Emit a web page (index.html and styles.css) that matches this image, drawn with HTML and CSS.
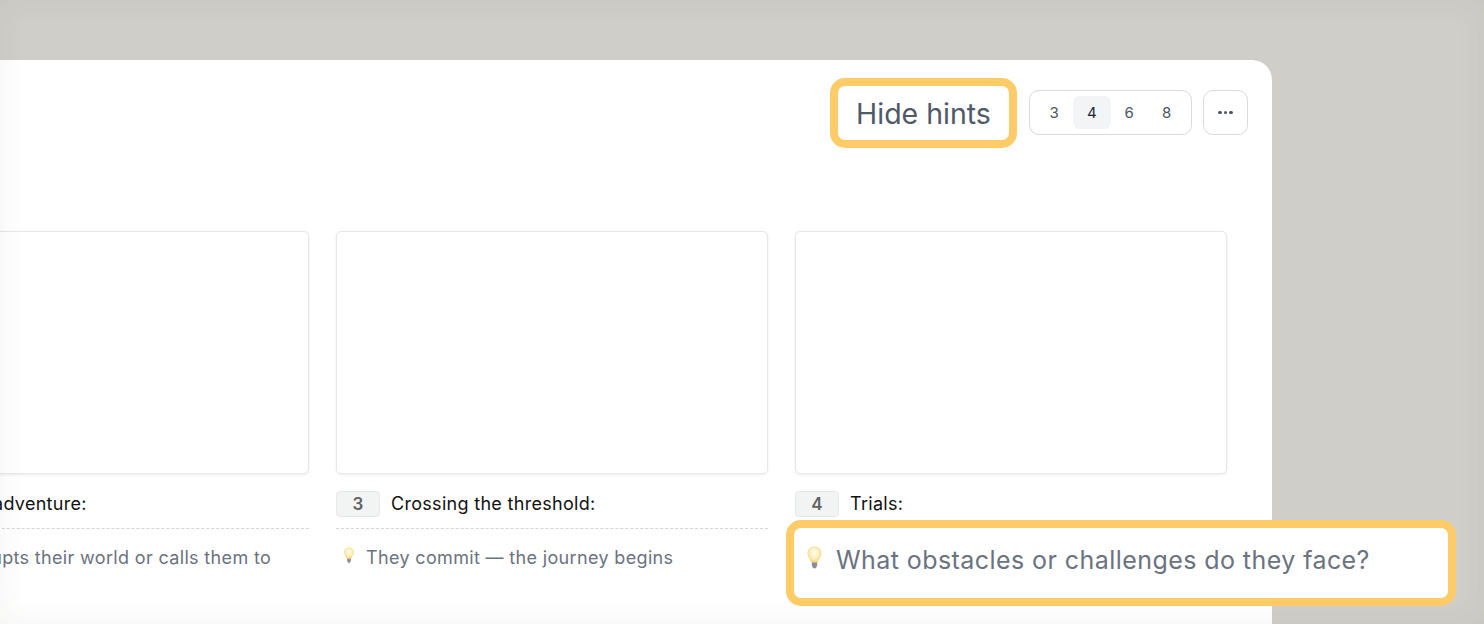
FILE: index.html
```html
<!DOCTYPE html>
<html lang="en">
<head>
    <meta charset="UTF-8">
    <title>Story board</title>
    <link rel="stylesheet" href="styles.css">
</head>
<body>
<svg class="defs" width="0" height="0">
    <defs>
        <radialGradient id="glow" cx="50%" cy="38%" r="60%">
            <stop offset="0%" stop-color="#fffdf0"/>
            <stop offset="60%" stop-color="#fdf0b8"/>
            <stop offset="100%" stop-color="#f6d27a"/>
        </radialGradient>
        <symbol id="bulb" viewBox="0 0 16 24">
            <path d="M8 1C4.200 1 1.500 3.800 1.500 7.300c0 2.900 2 4.600 2.800 6.700.4 1 .5 1.700.6 2.500h6.200c.1-.8.2-1.500.6-2.500.8-2.100 2.800-3.800 2.800-6.700C14.500 3.800 11.800 1 8 1z" fill="url(#glow)" stroke="#f8dc92" stroke-width="1"/>
            <path d="M5.400 16.500h5.200v3.300l-1.300 2.400H6.700l-1.300-2.400z" fill="#8b8d98"/>
        </symbol>
    </defs>
</svg>
<div class="stage">
    <div class="card">
        <div class="toolbar">
            <button class="hide-hints">Hide hints</button>
            <div class="seg">
                <span class="seg-item">3</span>
                <span class="seg-item active">4</span>
                <span class="seg-item">6</span>
                <span class="seg-item">8</span>
            </div>
            <button class="more">
                <i></i><i></i><i></i>
            </button>
        </div>
        <div class="panels">
            <div class="panel">
                <div class="frame"></div>
                <div class="label"><span class="num">2</span><span class="title">Call to adventure:</span></div>
                <div class="hint">
                    <svg class="bulb"><use href="#bulb"/></svg>
                    <p>What disrupts their world or calls them to action</p>
                </div>
            </div>
            <div class="panel">
                <div class="frame"></div>
                <div class="label"><span class="num">3</span><span class="title">Crossing the threshold:</span></div>
                <div class="hint">
                    <svg class="bulb"><use href="#bulb"/></svg>
                    <p>They commit — the journey begins</p>
                </div>
            </div>
            <div class="panel">
                <div class="frame"></div>
                <div class="label"><span class="num">4</span><span class="title">Trials:</span></div>
                <div class="hint">
                    <div class="hint-big">
                        <svg class="bulb-big"><use href="#bulb"/></svg>
                        <p>What obstacles or challenges do they face?</p>
                    </div>
                </div>
            </div>
        </div>
    </div>
</div>
<div class="vignette"></div>
</body>
</html>
```

FILE: styles.css
```css
html,body{margin:0;padding:0;height:100%;overflow:hidden}
body{background:#cfcec8;font-family:Inter,"Liberation Sans",sans-serif;color:#111}
button{font-family:inherit;background:#fff;cursor:pointer;padding:0}
p{margin:0}
.defs{display:block;height:0}

.stage{padding-top:60px;height:564px}
.card{
    width:1272px;
    height:100%;
    background:#fff;
    border-top-right-radius:20px;
}

/* top controls */
.toolbar{
    display:flex;
    justify-content:flex-end;
    align-items:flex-start;
    gap:11px;
    padding:18px 24px 0 0;
}
.hide-hints{
    width:187px;
    height:70px;
    box-sizing:border-box;
    border:8px solid #fdcc68;
    border-radius:15px;
    margin-right:1px;
    font-size:28.500px;
    color:#4f5968;
}
.seg{
    width:163px;
    height:45px;
    margin-top:12px;
    box-sizing:border-box;
    border:1.500px solid #d8d9e3;
    border-radius:10px;
    display:flex;
    align-items:center;
    justify-content:center;
    font-size:15px;
    color:#4b5563;
}
.seg-item{
    width:37.500px;
    height:33px;
    display:flex;
    align-items:center;
    justify-content:center;
    border-radius:6px;
}
.seg-item.active{background:#f3f4f6;color:#1f2937}
.more{
    width:45px;
    height:45px;
    margin-top:12px;
    box-sizing:border-box;
    border:1.500px solid #d8d9e3;
    border-radius:10px;
    display:flex;
    align-items:center;
    justify-content:center;
    gap:2px;
}
.more i{width:3.500px;height:3.500px;border-radius:50%;background:#4b5563}

/* story panels */
.panels{
    display:flex;
    justify-content:flex-end;
    gap:27.500px;
    padding-right:45.500px;
    margin-top:83px;
}
.panel{width:431.500px;flex:none}
.frame{
    height:243px;
    box-sizing:border-box;
    border:1px solid #e5e7eb;
    border-radius:5px;
    box-shadow:0 1px 3px rgba(0,0,0,.08);
}
.label{
    display:flex;
    align-items:center;
    gap:11px;
    margin-top:17px;
    padding-bottom:11px;
    border-bottom:1px dashed #d1d5db;
}
.panel:last-child .label{border-bottom-color:transparent}
.num{
    width:44px;
    height:26px;
    box-sizing:border-box;
    border:1px solid #e8e8ea;
    border-radius:4px;
    background:#f2f3f3;
    display:flex;
    align-items:center;
    justify-content:center;
    font-size:17px;
    font-weight:600;
    color:#5f6368;
}
.title{font-size:18px;line-height:26px;color:#111;letter-spacing:.3px}
.hint{
    position:relative;
    display:flex;
    gap:11px;
    padding:17px 0 0 7px;
    font-size:18px;
    line-height:24px;
    letter-spacing:.34px;
    color:#6b7280;
}
.bulb{width:12px;height:17px;flex:none;margin-top:1px}

/* enlarged hint, sits over the card edge */
.hint-big{
    position:absolute;
    left:-9px;
    top:-9px;
    width:670px;
    height:86px;
    box-sizing:border-box;
    border:8px solid #fdcc68;
    border-radius:15px;
    background:#fff;
    display:flex;
    align-items:flex-start;
    gap:13px;
    padding:16px 0 0 12px;
    font-size:25px;
    line-height:32px;
    letter-spacing:.43px;
    color:#6b7280;
}
.bulb-big{width:17px;height:24px;flex:none;margin-top:2px}

.vignette{
    position:fixed;
    inset:0;
    pointer-events:none;
    box-shadow:inset 0 0 30px rgba(60,60,50,.06);
}
```
